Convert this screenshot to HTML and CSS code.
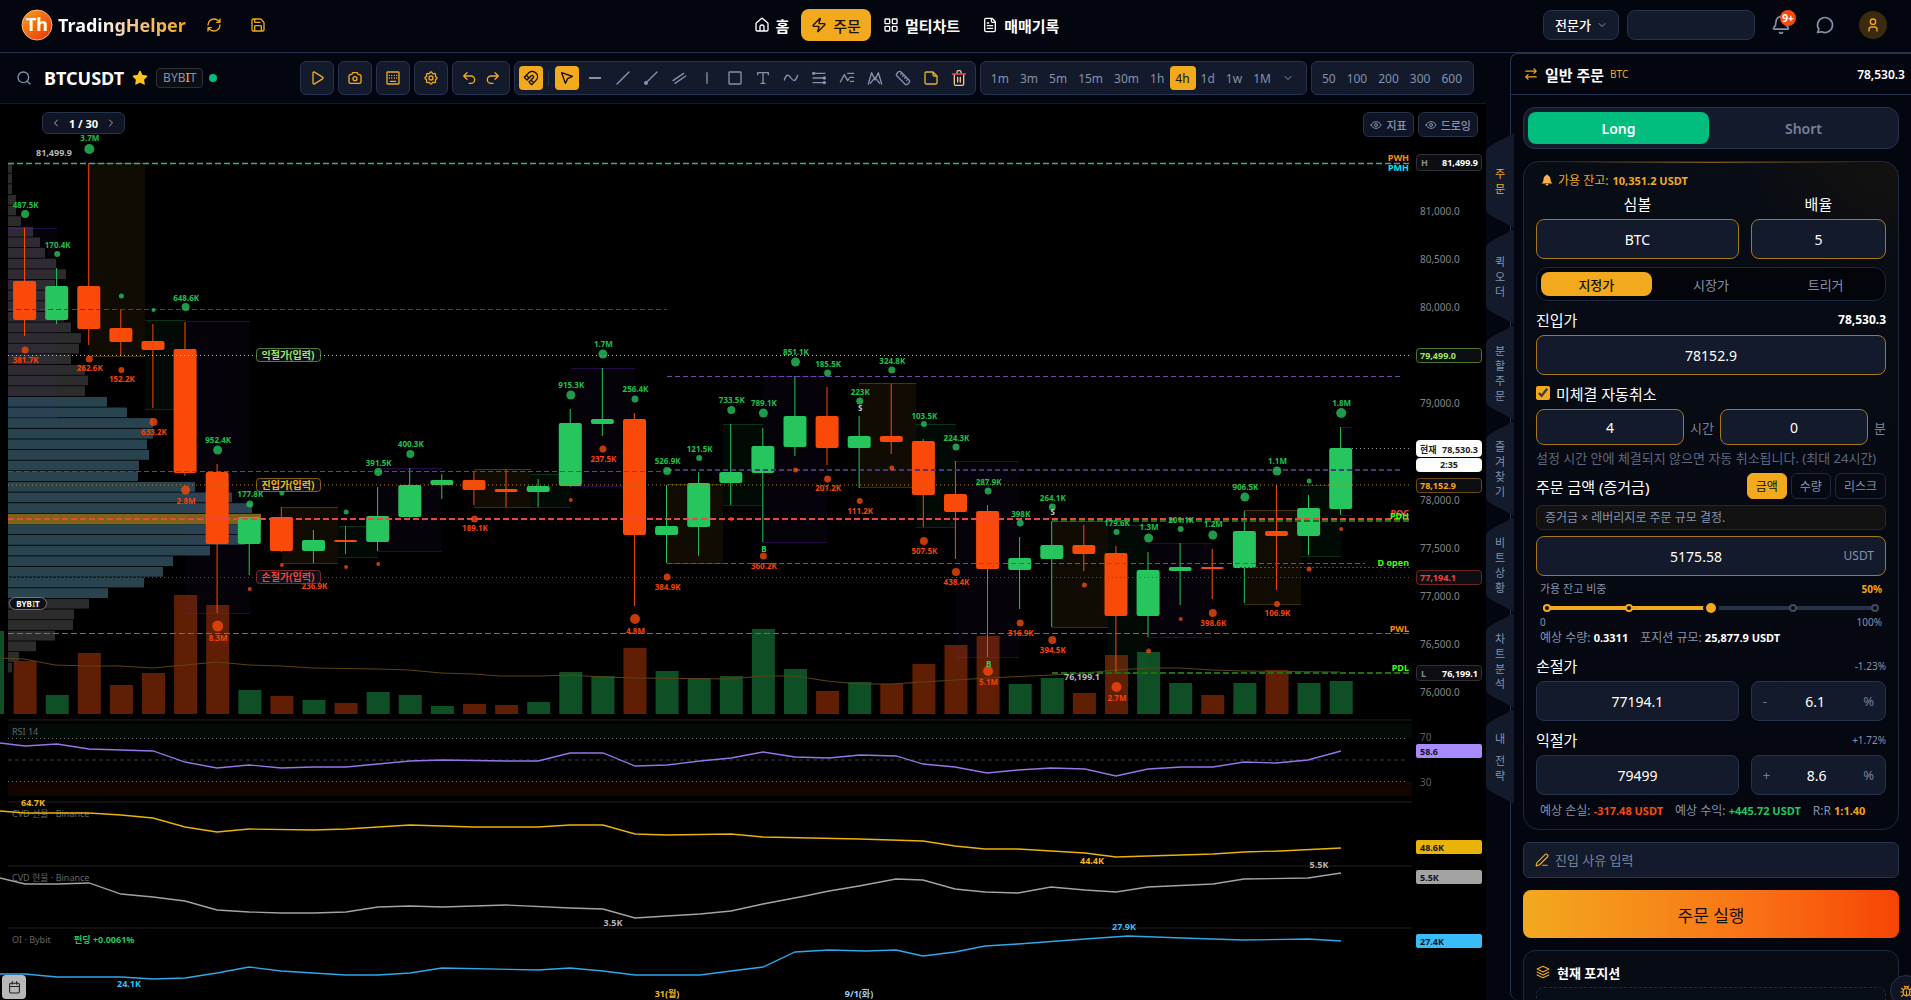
FILE: index.html
```html
<!DOCTYPE html>
<html lang="ko">
<head>
<meta charset="utf-8">
<title>TradingHelper</title>
<meta name="viewport" content="width=device-width, initial-scale=1">
<link rel="stylesheet" href="styles.css">
</head>
<body>
<svg class="sprite" aria-hidden="true">
  <symbol id="i-refresh" viewBox="0 0 24 24"><path d="M3 12a9 9 0 0 1 9-9 9.75 9.75 0 0 1 6.74 2.74L21 8M21 3v5h-5M21 12a9 9 0 0 1-9 9 9.75 9.75 0 0 1-6.74-2.74L3 16M8 16H3v5"/></symbol>
  <symbol id="i-save" viewBox="0 0 24 24"><path d="M15.2 3a2 2 0 0 1 1.4.6l3.8 3.8a2 2 0 0 1 .6 1.4V19a2 2 0 0 1-2 2H5a2 2 0 0 1-2-2V5a2 2 0 0 1 2-2zM17 21v-7a1 1 0 0 0-1-1H8a1 1 0 0 0-1 1v7M7 3v4a1 1 0 0 0 1 1h7"/></symbol>
  <symbol id="i-home" viewBox="0 0 24 24"><path d="M3 10a2 2 0 0 1 .7-1.5l7-6a2 2 0 0 1 2.6 0l7 6A2 2 0 0 1 21 10v9a2 2 0 0 1-2 2H5a2 2 0 0 1-2-2zM9 21v-6a3 3 0 0 1 6 0v6"/></symbol>
  <symbol id="i-zap" viewBox="0 0 24 24"><path d="M4 14a1 1 0 0 1-.78-1.63l9.9-10.2a.5.5 0 0 1 .86.46l-1.92 6.02A1 1 0 0 0 13 10h7a1 1 0 0 1 .78 1.63l-9.9 10.2a.5.5 0 0 1-.86-.46l1.92-6.02A1 1 0 0 0 11 14z"/></symbol>
  <symbol id="i-grid" viewBox="0 0 24 24"><rect x="3" y="3" width="7" height="7" rx="1"/><rect x="14" y="3" width="7" height="7" rx="1"/><rect x="3" y="14" width="7" height="7" rx="1"/><rect x="14" y="14" width="7" height="7" rx="1"/></symbol>
  <symbol id="i-file" viewBox="0 0 24 24"><path d="M15 2H6a2 2 0 0 0-2 2v16a2 2 0 0 0 2 2h12a2 2 0 0 0 2-2V7zM14 2v4a2 2 0 0 0 2 2h4M10 9H8M16 13H8M16 17H8"/></symbol>
  <symbol id="i-down" viewBox="0 0 24 24"><path d="m6 9 6 6 6-6"/></symbol>
  <symbol id="i-left" viewBox="0 0 24 24"><path d="m15 18-6-6 6-6"/></symbol>
  <symbol id="i-right" viewBox="0 0 24 24"><path d="m9 18 6-6-6-6"/></symbol>
  <symbol id="i-bell" viewBox="0 0 24 24"><path d="M10.3 21a2 2 0 0 0 3.4 0M3.3 15.3A1 1 0 0 0 4 17h16a1 1 0 0 0 .7-1.7C19.4 14 18 12.5 18 8A6 6 0 0 0 6 8c0 4.500-1.400 6-2.700 7.300"/></symbol>
  <symbol id="i-chat" viewBox="0 0 24 24"><path d="M3 21l1.650-3.800a9 9 0 1 1 3.400 2.900z"/></symbol>
  <symbol id="i-user" viewBox="0 0 24 24"><circle cx="12" cy="7" r="4"/><path d="M6 21v-2a4 4 0 0 1 4-4h4a4 4 0 0 1 4 4v2"/></symbol>
  <symbol id="i-search" viewBox="0 0 24 24"><circle cx="11" cy="11" r="8"/><path d="m21 21-4.300-4.300"/></symbol>
  <symbol id="i-star" viewBox="0 0 24 24"><path fill="currentColor" d="M12 2l3.100 6.300 6.900 1-5 4.900 1.200 6.800-6.200-3.200L5.800 21 7 14.200l-5-4.900 6.900-1z"/></symbol>
  <symbol id="i-play" viewBox="0 0 24 24"><path d="M6 4.500a1.500 1.500 0 0 1 2.300-1.300l12 7.500a1.500 1.500 0 0 1 0 2.600l-12 7.500A1.500 1.500 0 0 1 6 19.500z"/></symbol>
  <symbol id="i-camera" viewBox="0 0 24 24"><path d="M5 7h1a2 2 0 0 0 2-2 1 1 0 0 1 1-1h6a1 1 0 0 1 1 1 2 2 0 0 0 2 2h1a2 2 0 0 1 2 2v9a2 2 0 0 1-2 2H5a2 2 0 0 1-2-2V9a2 2 0 0 1 2-2"/><circle cx="12" cy="13" r="3"/></symbol>
  <symbol id="i-keys" viewBox="0 0 24 24"><rect x="3" y="3" width="18" height="18" rx="1"/><path d="M6.500 8h.1M10 8h.1M14 8h.1M17.500 8h.1M6.500 12h.1M10 12h.1M14 12h.1M17.500 12h.1M8 17h8"/></symbol>
  <symbol id="i-gear" viewBox="0 0 24 24"><path d="M10.300 4.300c.4-1.800 2.900-1.800 3.400 0a1.700 1.700 0 0 0 2.600 1.100c1.500-.9 3.300.8 2.400 2.400a1.700 1.700 0 0 0 1 2.500c1.800.4 1.800 2.900 0 3.400a1.700 1.700 0 0 0-1 2.600c.9 1.500-.9 3.300-2.400 2.400a1.700 1.700 0 0 0-2.600 1c-.4 1.800-2.900 1.800-3.400 0a1.700 1.700 0 0 0-2.500-1c-1.600.9-3.300-.9-2.400-2.400a1.700 1.700 0 0 0-1.100-2.600c-1.800-.5-1.800-3 0-3.400a1.700 1.700 0 0 0 1.100-2.500c-.9-1.600.8-3.300 2.400-2.400a1.700 1.700 0 0 0 2.500-1.100z"/><circle cx="12" cy="12" r="3"/></symbol>
  <symbol id="i-undo" viewBox="0 0 24 24"><path d="m9 14-5-5 5-5M4 9h11a5.500 5.500 0 0 1 0 11h-3"/></symbol>
  <symbol id="i-redo" viewBox="0 0 24 24"><path d="m15 14 5-5-5-5M20 9H9a5.500 5.500 0 0 0 0 11h3"/></symbol>
  <symbol id="i-magnet" viewBox="0 0 24 24"><path d="m6 15-4-4 6.750-6.770a7.790 7.790 0 0 1 11 11L13 22l-4-4 6.390-6.360a2.140 2.140 0 0 0-3-3zM5 8l4 4M12 15l4 4"/></symbol>
  <symbol id="i-cursor" viewBox="0 0 24 24"><path d="M4 4l5.500 16 3.500-7 7-3.500z"/></symbol>
  <symbol id="i-minus" viewBox="0 0 24 24"><path d="M4 12h16" stroke-width="3"/></symbol>
  <symbol id="i-line" viewBox="0 0 24 24"><path d="M3 21 21 3"/></symbol>
  <symbol id="i-ray" viewBox="0 0 24 24"><path d="M4 20 21 3"/><circle cx="4.500" cy="19.500" r="2" fill="currentColor"/></symbol>
  <symbol id="i-parallel" viewBox="0 0 24 24"><path d="M3 16 19 5M6 20 22 9"/></symbol>
  <symbol id="i-vline" viewBox="0 0 24 24"><path d="M12 4v16"/></symbol>
  <symbol id="i-rect" viewBox="0 0 24 24"><rect x="3" y="3" width="18" height="18" rx="1"/></symbol>
  <symbol id="i-text" viewBox="0 0 24 24"><path d="M4 7V4h16v3M12 4v16M9 20h6"/></symbol>
  <symbol id="i-wave" viewBox="0 0 24 24"><path d="M2 15c3-9 6-9 10-3s7 5 10-4"/></symbol>
  <symbol id="i-fib" viewBox="0 0 24 24"><path d="M3 5h18M3 12h18M3 19h18"/><path d="M4 5h.1M20 12h.1M20 19h.1" stroke-width="5"/></symbol>
  <symbol id="i-pattern" viewBox="0 0 24 24"><path d="M2 18 8 7l5 9 2-3M13 5h9M16 11h6M17 17h5"/></symbol>
  <symbol id="i-peaks" viewBox="0 0 24 24"><path d="M2 21 7 4l5 11 5-11 5 17M5 20l7-9 7 9"/></symbol>
  <symbol id="i-ruler" viewBox="0 0 24 24"><path d="M21.300 15.300a2.400 2.400 0 0 1 0 3.400l-2.600 2.600a2.400 2.400 0 0 1-3.400 0L2.700 8.700a2.400 2.400 0 0 1 0-3.400l2.600-2.600a2.400 2.400 0 0 1 3.400 0zM14.500 12.500l2-2M11.500 9.500l2-2M8.500 6.500l2-2M17.500 15.500l2-2"/></symbol>
  <symbol id="i-note" viewBox="0 0 24 24"><path d="M15 3H5a2 2 0 0 0-2 2v14a2 2 0 0 0 2 2h14a2 2 0 0 0 2-2V9zM15 3v4a2 2 0 0 0 2 2h4"/></symbol>
  <symbol id="i-eye" viewBox="0 0 24 24"><path d="M2 12c4-9 16-9 20 0-4 9-16 9-20 0z"/><circle cx="12" cy="12" r="3"/></symbol>
  <symbol id="i-swap" viewBox="0 0 24 24"><path d="m17 3 4 4-4 4M21 7H3M7 21l-4-4 4-4M3 17h18"/></symbol>
  <symbol id="i-pen" viewBox="0 0 24 24"><path d="M13 21h8M21.170 6.810a2.820 2.820 0 0 0-3.990-3.990L3.840 16.170a2 2 0 0 0-.5.830l-1.320 4.350a.5.500 0 0 0 .620.620l4.350-1.320a2 2 0 0 0 .830-.5z"/></symbol>
  <symbol id="i-layers" viewBox="0 0 24 24"><path d="M12 2 22 7 12 12 2 7zM2 12l10 5 10-5M2 17l10 5 10-5"/></symbol>
  <symbol id="i-calendar" viewBox="0 0 24 24"><rect x="3" y="4" width="18" height="18" rx="2"/><path d="M8 1v5M16 1v5M3 10h18"/></symbol>
  <symbol id="i-bug" viewBox="0 0 24 24"><path d="M8 2l2 2M16 2l-2 2M9 7V6a3 3 0 0 1 6 0v1M12 20a6 6 0 0 1-6-6v-3a4 4 0 0 1 4-4h4a4 4 0 0 1 4 4v3a6 6 0 0 1-6 6zM12 20v-9M6 13H2M22 13h-4M6 9 3 6M18 9l3-3M7 17l-4 4M17 17l4 4"/></symbol>
</svg>

<header class="topbar">
  <div class="brand">
    <svg class="logo" viewBox="0 0 32 32" role="img" aria-label="TradingHelper">
      <defs><linearGradient id="logo-fill" x1="0" y1="0" x2="1" y2="1"><stop offset="0" stop-color="#f9a01b"/><stop offset="1" stop-color="#e8300a"/></linearGradient></defs>
      <circle cx="16" cy="16" r="15" fill="url(#logo-fill)" stroke="#f3b673"/>
      <text x="16" y="22" text-anchor="middle" class="logo-text">Th</text>
    </svg>
    <span class="brand-name">TradingHelper</span>
    <button class="icon-button" aria-label="새로고침"><svg class="icon"><use href="#i-refresh"/></svg></button>
    <button class="icon-button" aria-label="저장"><svg class="icon"><use href="#i-save"/></svg></button>
  </div>
  <nav class="nav">
    <a href="#home"><svg class="icon"><use href="#i-home"/></svg>홈</a>
    <a href="#order" class="active"><svg class="icon"><use href="#i-zap"/></svg>주문</a>
    <a href="#multi"><svg class="icon"><use href="#i-grid"/></svg>멀티차트</a>
    <a href="#journal"><svg class="icon"><use href="#i-file"/></svg>매매기록</a>
  </nav>
  <div class="account">
    <span class="level">
      <select aria-label="모드"><option>전문가</option></select>
      <svg class="icon"><use href="#i-down"/></svg>
    </span>
    <input class="top-input" type="text" aria-label="검색">
    <button class="round-button" aria-label="알림"><svg class="icon"><use href="#i-bell"/></svg><span class="badge">9+</span></button>
    <button class="round-button chat" aria-label="채팅"><svg class="icon"><use href="#i-chat"/></svg></button>
    <button class="avatar" aria-label="계정"><svg class="icon"><use href="#i-user"/></svg></button>
  </div>
</header>

<main class="workspace">
  <section class="chart-column">
    <div class="toolbar">
      <button class="search" aria-label="심볼 검색"><svg class="icon"><use href="#i-search"/></svg></button>
      <h1 class="pair">BTCUSDT</h1>
      <svg class="icon star"><use href="#i-star"/></svg>
      <span class="exchange">BYB<b>I</b>T</span>
      <span class="online"></span>
      <div class="tools">
        <button class="box-button" aria-label="재생"><svg class="icon"><use href="#i-play"/></svg></button>
        <button class="box-button" aria-label="캡처"><svg class="icon"><use href="#i-camera"/></svg></button>
        <button class="box-button" aria-label="단축키"><svg class="icon"><use href="#i-keys"/></svg></button>
        <button class="box-button" aria-label="설정"><svg class="icon"><use href="#i-gear"/></svg></button>
        <div class="group gold">
          <button class="tool" aria-label="실행 취소"><svg class="icon"><use href="#i-undo"/></svg></button>
          <button class="tool" aria-label="다시 실행"><svg class="icon"><use href="#i-redo"/></svg></button>
        </div>
        <div class="group drawing">
          <button class="tool on" aria-label="자석"><svg class="icon"><use href="#i-magnet"/></svg></button>
          <span class="divider"></span>
          <button class="tool on" aria-label="선택"><svg class="icon"><use href="#i-cursor"/></svg></button>
          <button class="tool" aria-label="수평선"><svg class="icon"><use href="#i-minus"/></svg></button>
          <button class="tool" aria-label="추세선"><svg class="icon"><use href="#i-line"/></svg></button>
          <button class="tool" aria-label="광선"><svg class="icon"><use href="#i-ray"/></svg></button>
          <button class="tool" aria-label="채널"><svg class="icon"><use href="#i-parallel"/></svg></button>
          <button class="tool" aria-label="수직선"><svg class="icon"><use href="#i-vline"/></svg></button>
          <button class="tool" aria-label="사각형"><svg class="icon"><use href="#i-rect"/></svg></button>
          <button class="tool" aria-label="텍스트"><svg class="icon"><use href="#i-text"/></svg></button>
          <button class="tool" aria-label="곡선"><svg class="icon"><use href="#i-wave"/></svg></button>
          <button class="tool" aria-label="피보나치"><svg class="icon"><use href="#i-fib"/></svg></button>
          <button class="tool" aria-label="패턴"><svg class="icon"><use href="#i-pattern"/></svg></button>
          <button class="tool" aria-label="파동"><svg class="icon"><use href="#i-peaks"/></svg></button>
          <button class="tool" aria-label="자"><svg class="icon"><use href="#i-ruler"/></svg></button>
          <button class="tool yellow" aria-label="메모"><svg class="icon"><use href="#i-note"/></svg></button>
          <button class="tool" aria-label="삭제"><svg class="trash" viewBox="0 0 24 24"><path d="M5 7v14a2 2 0 0 0 2 2h10a2 2 0 0 0 2-2V7M9 5V3a2 2 0 0 1 2-2h2a2 2 0 0 1 2 2v2M10 11v7M14 11v7" stroke="#f5c58f"/><path d="M2 6h20" stroke="#ef4560"/></svg></button>
        </div>
        <div class="group frames">
          <button>1m</button><button>3m</button><button>5m</button><button>15m</button><button>30m</button><button>1h</button><button class="on">4h</button><button>1d</button><button>1w</button><button>1M</button>
          <button class="more" aria-label="더보기"><svg class="icon"><use href="#i-down"/></svg></button>
        </div>
        <div class="group frames">
          <button>50</button><button>100</button><button>200</button><button>300</button><button>600</button>
        </div>
      </div>
    </div>
    <div class="chart">
      <svg id="chart" viewBox="0 104 1486 896" preserveAspectRatio="xMinYMin meet" role="img" aria-label="BTCUSDT 4h"></svg>
      <div class="pager">
        <button aria-label="이전"><svg class="icon"><use href="#i-left"/></svg></button>
        <span>1 / 30</span>
        <button aria-label="다음"><svg class="icon"><use href="#i-right"/></svg></button>
      </div>
      <div class="toggles">
        <button><svg class="icon"><use href="#i-eye"/></svg>지표</button>
        <button><svg class="icon"><use href="#i-eye"/></svg>드로잉</button>
      </div>
      <button class="calendar" aria-label="날짜"><svg class="icon"><use href="#i-calendar"/></svg></button>
    </div>
  </section>

  <nav class="side-tabs">
    <button class="on"><span>주문</span></button>
    <button><span>퀵오더</span></button>
    <button><span>분할주문</span></button>
    <button><span>즐겨찾기</span></button>
    <button><span>비트상황</span></button>
    <button><span>차트분석</span></button>
    <button><span>내</span> <span>전략</span></button>
  </nav>

  <aside class="panel">
    <div class="panel-head">
      <svg class="icon"><use href="#i-swap"/></svg>
      <h2>일반 주문</h2><span class="coin">BTC</span>
      <strong>78,530.3</strong>
    </div>
    <form class="panel-body">
      <div class="sides">
        <button type="button" class="on">Long</button>
        <button type="button">Short</button>
      </div>

      <div class="card order">
        <p class="notice"><svg class="bell-fill" viewBox="0 0 24 24"><path d="M12 1a2 2 0 0 1 2 2c3 1 5 4 5 8 0 4 2 6 4 8H1c2-2 4-4 4-8 0-4 2-7 5-8a2 2 0 0 1 2-2z"/><path d="M9 20h6a3 3 0 0 1-6 0z"/></svg>가용 잔고: <b>10,351.2 USDT</b></p>
        <div class="pair-row head">
          <label for="symbol">심볼</label><label for="leverage">배율</label>
        </div>
        <div class="pair-row">
          <input id="symbol" class="gold-field" type="text" value="BTC">
          <input id="leverage" class="gold-field" type="text" value="5">
        </div>
        <div class="segments">
          <button type="button" class="on">지정가</button>
          <button type="button">시장가</button>
          <button type="button">트리거</button>
        </div>
        <div class="field-head"><label for="entry">진입가</label><strong>78,530.3</strong></div>
        <input id="entry" class="gold-field" type="text" value="78152.9">
        <label class="check"><input type="checkbox" checked>미체결 자동취소</label>
        <div class="expiry">
          <input id="hours" class="gold-field" type="text" value="4"><label for="hours">시간</label>
          <input id="minutes" class="gold-field" type="text" value="0"><label for="minutes">분</label>
        </div>
        <p class="help">설정 시간 안에 체결되지 않으면 자동 취소됩니다. (최대 24시간)</p>
        <div class="amount-head">
          <label for="amount">주문 금액 (증거금)</label>
          <button type="button" class="on">금액</button>
          <button type="button">수량</button>
          <button type="button">리스크</button>
        </div>
        <p class="hint">증거금 × 레버리지로 주문 규모 결정.</p>
        <div class="unit-field">
          <input id="amount" class="gold-field" type="text" value="5175.58"><span>USDT</span>
        </div>
        <div class="ratio-head"><label for="ratio">가용 잔고 비중</label><strong>50%</strong></div>
        <div class="slider">
          <span class="dots"><i class="full"></i><i class="full"></i><i class="gap"></i><i></i><i></i></span>
          <input id="ratio" type="range" min="0" max="100" value="50">
        </div>
        <div class="scale"><span>0</span><span>100%</span></div>
        <p class="estimate"><span>예상 수량: <b>0.3311</b></span><span>포지션 규모: <b>25,877.9 USDT</b></span></p>
        <div class="field-head stop"><label for="stop">손절가</label><small>-1.23%</small></div>
        <div class="pair-row">
          <input id="stop" class="field" type="text" value="77194.1">
          <div class="percent"><span>-</span><input class="field" type="text" aria-label="손절 비율" value="6.1"><span>%</span></div>
        </div>
        <div class="field-head"><label for="take">익절가</label><small>+1.72%</small></div>
        <div class="pair-row">
          <input id="take" class="field" type="text" value="79499">
          <div class="percent"><span>+</span><input class="field" type="text" aria-label="익절 비율" value="8.6"><span>%</span></div>
        </div>
        <p class="estimate result"><span>예상 손실: <b class="loss">-317.48 USDT</b></span><span>예상 수익: <b class="gain">+445.72 USDT</b></span><span>R:R <b class="rr">1:1.40</b></span></p>
      </div>

      <div class="reason">
        <svg class="icon"><use href="#i-pen"/></svg>
        <input type="text" aria-label="진입 사유" placeholder="진입 사유 입력">
      </div>
      <button type="submit" class="submit">주문 실행</button>

      <section class="card positions">
        <h3><svg class="icon"><use href="#i-layers"/></svg>현재 포지션</h3>
        <div class="empty"></div>
      </section>
    </form>
  </aside>
  <button class="bug" aria-label="버그 신고"><svg class="icon"><use href="#i-bug"/></svg></button>
</main>
<script src="chart.js"></script>
</body>
</html>
```
FILE: styles.css
```css
* { box-sizing: border-box; }

:root {
  --bg: #03060e;
  --surface: #121a2b;
  --line: #26334c;
  --gold: #f2a91e;
  --gold-line: #a87718;
  --muted: #8592ab;
  --green: #22c55e;
  --red: #f94a0a;
}

body {
  margin: 0;
  height: 100vh;
  display: flex;
  flex-direction: column;
  overflow: hidden;
  background: var(--bg);
  color: #fff;
  font-family: "Noto Sans", "Noto Sans CJK KR", sans-serif;
  font-size: 12px;
}

button, input, select { font: inherit; color: inherit; }
button { margin: 0; padding: 0; border: 0; background: none; cursor: pointer; }
h1, h2, h3, p { margin: 0; }
.sprite { position: absolute; width: 0; height: 0; }
.icon, .trash {
  width: 16px;
  height: 16px;
  flex: none;
  fill: none;
  stroke: currentColor;
  stroke-width: 2;
  stroke-linecap: round;
  stroke-linejoin: round;
}

/* top bar */
.topbar {
  flex: none;
  height: 53px;
  padding: 0 24px 2px 21px;
  display: flex;
  align-items: center;
  justify-content: space-between;
  border-bottom: 1px solid var(--line);
}
.brand { display: flex; align-items: center; }
.logo { width: 32px; height: 32px; margin-right: 5px; }
.logo-text { fill: #fff; font-size: 18px; font-weight: 700; }
.brand-name {
  margin-right: 16px;
  font-size: 18px;
  font-weight: 700;
  background: linear-gradient(90deg, #fff 30%, #f2c48c 60%, var(--gold));
  background-clip: text;
  color: transparent;
}
.icon-button { width: 24px; height: 24px; margin-right: 20px; color: var(--gold); display: grid; place-items: center; }
.icon-button:last-child { margin-right: 0; }
.nav { display: flex; gap: 2px; }
.nav a {
  height: 32px;
  padding: 0 10px;
  display: flex;
  align-items: center;
  gap: 6px;
  border-radius: 8px;
  color: #fff;
  font-size: 15px;
  font-weight: 600;
  text-decoration: none;
}
.nav a.active { background: var(--gold); color: #1a1405; font-weight: 500; }
.account { display: flex; align-items: center; }
.level { position: relative; display: flex; align-items: center; }
.level select {
  width: 76px;
  height: 30px;
  padding: 0 11px;
  appearance: none;
  border: 1px solid var(--line);
  border-radius: 8px;
  background: var(--surface);
  font-size: 13px;
  font-weight: 500;
}
.level .icon { position: absolute; right: 11px; width: 12px; height: 12px; color: var(--muted); pointer-events: none; }
.top-input {
  width: 128px;
  height: 30px;
  margin: 0 8px;
  border: 1px solid var(--line);
  border-radius: 8px;
  background: var(--surface);
}
.round-button { position: relative; width: 36px; height: 32px; color: var(--muted); display: grid; place-items: center; }
.round-button .icon { width: 20px; height: 20px; }
.round-button.chat { width: 52px; }
.badge {
  position: absolute;
  top: 1px;
  right: 3px;
  width: 16px;
  height: 16px;
  border-radius: 8px;
  background: var(--red);
  color: #fff;
  font-size: 10px;
  font-weight: 700;
  line-height: 16px;
  text-align: center;
}
.avatar { width: 28px; height: 28px; margin-left: 8px; border-radius: 50%; background: #3a2a10; color: var(--gold); display: grid; place-items: center; }

/* workspace */
.workspace { flex: 1; min-height: 0; display: flex; position: relative; }
.chart-column { flex: 1; min-width: 0; display: flex; flex-direction: column; }
.toolbar {
  flex: none;
  height: 51px;
  padding: 0 12px 0 16px;
  display: flex;
  align-items: center;
  border-bottom: 1px solid #15181f;
}
.search { width: 16px; height: 16px; margin-right: 12px; color: var(--muted); }
.pair { font-size: 18px; font-weight: 700; }
.star { margin: 0 8px; color: #fcc419; }
.exchange {
  padding: 0 6px;
  border: 1px solid #2c2f36;
  border-radius: 4px;
  background: #0c0e14;
  color: var(--muted);
  line-height: 18px;
}
.exchange b { font-weight: 500; color: var(--gold); }
.online { width: 8px; height: 8px; margin-left: 6px; border-radius: 50%; background: #00bf7d; }
.tools { margin-left: auto; display: flex; gap: 4px; }
.box-button, .group {
  height: 34px;
  border: 1px solid var(--line);
  border-radius: 6px;
  background: var(--surface);
}
.box-button { width: 34px; color: var(--gold); display: grid; place-items: center; }
.group { padding: 0 4px; display: flex; align-items: center; gap: 4px; }
.group.gold { gap: 0; color: var(--gold); }
.tool { width: 24px; height: 24px; border-radius: 4px; display: grid; place-items: center; }
.drawing { color: var(--muted); }
.tool.on { background: var(--gold); color: #12100a; }
.tool.yellow { color: #e6b422; }
.divider { width: 1px; height: 16px; margin: 0 2px 0 1px; background: var(--line); }
.group.frames { gap: 0; padding: 0 5px; color: var(--muted); }
.frames button { height: 24px; padding: 0 6px 0 5px; border-radius: 4px; }
.frames .on { background: var(--gold); color: #12100a; }
.frames .more { width: 24px; display: grid; place-items: center; }
.frames .more .icon { width: 12px; height: 12px; }

.chart { position: relative; flex: 1; min-height: 0; overflow: hidden; background: #000; }
.chart > svg { display: block; width: 100%; }
.pager, .toggles { position: absolute; display: flex; align-items: center; }
.pager {
  top: 8px;
  left: 42px;
  width: 83px;
  height: 22px;
  padding: 0 7px;
  justify-content: space-between;
  border: 1px solid var(--line);
  border-radius: 6px;
  background: #0f1524;
  font-size: 11px;
  font-weight: 700;
}
.pager .icon { width: 12px; height: 12px; display: block; color: #a3abba; }
.toggles { top: 8px; right: 8px; gap: 4px; }
.toggles button {
  height: 25px;
  padding: 0 6px;
  display: flex;
  align-items: center;
  gap: 4px;
  border: 1px solid var(--line);
  border-radius: 6px;
  background: #0f1524;
  color: var(--muted);
  font-size: 11px;
  font-weight: 500;
}
.toggles .icon { width: 12px; height: 12px; }
.calendar {
  position: absolute;
  left: 2px;
  bottom: 1px;
  width: 24px;
  height: 24px;
  border-radius: 4px;
  background: #b9b9b9;
  color: #222;
  display: grid;
  place-items: center;
}
.calendar .icon { width: 13px; height: 13px; }

/* chart drawing */
.lbl { font-size: 8px; font-weight: 700; text-anchor: middle; }
.axis { font-size: 10px; fill: #858585; }
.axis.dim { fill: #5c5c5c; }
.tag { font-size: 9px; font-weight: 700; }
.tag.big { font-size: 10px; }
.title { font-size: 9px; fill: #666; }
.end { text-anchor: end; }
.mid { text-anchor: middle; }

/* side tabs */
.side-tabs { flex: none; width: 24px; padding-top: 80px; display: flex; flex-direction: column; gap: 1px; z-index: 2; }
.side-tabs button {
  flex: none;
  width: 28px;
  height: 95px;
  display: flex;
  flex-direction: column;
  align-items: center;
  justify-content: center;
  gap: 7px;
  background: var(--surface);
  clip-path: polygon(100% 0, 18% 13%, 5% 16%, 0 19%, 0 81%, 5% 84%, 18% 87%, 100% 100%);
  color: var(--muted);
  font-size: 11px;
  line-height: 15px;
}
.side-tabs span { width: 11px; word-break: break-all; }
.side-tabs .on { color: var(--gold); }

/* order panel */
.panel {
  flex: none;
  width: 401px;
  border-left: 1px solid var(--line);
  border-top: 1px solid var(--line);
  border-radius: 8px 0 0 8px;
  display: flex;
  flex-direction: column;
  min-height: 0;
}
.panel-head {
  flex: none;
  height: 41px;
  padding: 0 6px 0 13px;
  display: flex;
  align-items: center;
  border-bottom: 1px solid var(--line);
}
.panel-head .icon { width: 14px; height: 14px; color: var(--gold); }
.panel-head h2 { margin: 0 6px 0 7px; font-size: 15px; font-weight: 600; }
.coin { color: var(--gold); font-size: 10px; }
.panel-head strong { margin-left: auto; font-size: 12px; font-weight: 600; }
.panel-body {
  flex: 1;
  min-height: 0;
  padding: 12px;
  display: flex;
  flex-direction: column;
  gap: 12px;
  overflow-y: auto;
  scrollbar-width: none;
}
.panel-body > * { flex: none; }
.sides {
  height: 42px;
  padding: 4px;
  display: grid;
  grid-template-columns: 1fr 1fr;
  gap: 4px;
  border: 1px solid var(--line);
  border-radius: 12px;
  background: var(--surface);
}
.sides button { border-radius: 8px; color: #76829a; font-size: 14px; font-weight: 600; }
.sides .on { background: #00bd7e; color: #fff; }

.card { border: 1px solid #1d2940; background: #070b14; }
.order {
  padding: 10px 12px;
  display: flex;
  flex-direction: column;
  border-radius: 16px;
  background:
    linear-gradient(90deg, transparent 10%, #7a5a18 50%, transparent 90%) top / 100% 1px no-repeat,
    radial-gradient(160px 120px at 100% 0, #15120f, transparent),
    linear-gradient(180deg, #080c15, #04070f);
}
.notice { height: 16px; padding-left: 5px; display: flex; align-items: center; gap: 4px; color: var(--gold); font-size: 12px; }
.notice b { font-size: 11px; font-weight: 700; }
.bell-fill { width: 12px; height: 12px; margin-right: 1px; fill: #f7b24d; }
.pair-row { display: grid; grid-template-columns: 3fr 2fr; gap: 12px; }
.pair-row.head { margin: 6px 0 5px; text-align: center; font-size: 15px; line-height: 20px; }
.gold-field, .field {
  width: 100%;
  min-width: 0;
  height: 40px;
  padding: 0 12px;
  border: 1px solid var(--gold-line);
  border-radius: 8px;
  background: var(--surface);
  font-size: 14px;
  text-align: center;
}
.field { border-color: var(--line); }
.segments {
  height: 34px;
  margin-top: 8px;
  padding: 4px;
  display: grid;
  grid-template-columns: repeat(3, 1fr);
  gap: 4px;
  border: 1px solid #1d2940;
  border-radius: 12px;
  background: #03050b;
}
.segments button { border-radius: 8px; color: var(--muted); font-size: 13px; }
.segments .on { background: var(--gold); color: #12100a; font-weight: 500; }
.field-head {
  margin: 9px 0 5px;
  display: flex;
  justify-content: space-between;
  align-items: center;
  font-size: 15px;
  line-height: 20px;
}
.field-head strong { font-size: 12px; font-weight: 700; }
.field-head small { color: var(--muted); font-size: 10px; }
.field-head.stop { margin-top: 10px; }
.check { height: 20px; margin: 8px 0 6px; display: flex; align-items: center; gap: 6px; font-size: 15px; }
.check input { width: 14px; height: 14px; margin: 0; accent-color: var(--gold); }
.expiry { display: flex; align-items: center; gap: 6px; color: #76829a; font-size: 13px; }
.expiry .gold-field { flex: 1; height: 36px; color: #fff; }
.help { margin: 4px 0 6px; color: #5d6880; font-size: 13px; line-height: 18px; white-space: nowrap; }
.amount-head { height: 26px; display: flex; align-items: center; gap: 4px; font-size: 15px; }
.amount-head label { margin-right: auto; }
.amount-head button {
  height: 26px;
  padding: 0 8px;
  border: 1px solid #1d2940;
  border-radius: 6px;
  color: var(--muted);
  font-size: 12px;
}
.amount-head .on { background: var(--gold); border-color: var(--gold); color: #12100a; }
.hint {
  height: 25px;
  margin: 6px 0;
  padding: 0 8px;
  border: 1px solid #33261a;
  border-radius: 6px;
  background: #121212;
  color: var(--muted);
  font-size: 12px;
  line-height: 23px;
}
.unit-field { position: relative; }
.unit-field input { padding-right: 42px; }
.unit-field span { position: absolute; top: 0; right: 12px; color: var(--muted); font-size: 12px; line-height: 40px; }
.unit-field input { display: block; }
.ratio-head, .scale { padding: 0 4px; display: flex; justify-content: space-between; color: var(--muted); }
.ratio-head { margin: 5px 0 3px; font-size: 11px; line-height: 16px; }
.ratio-head strong { color: #f5a20f; font-size: 10px; font-weight: 700; }
.slider { position: relative; height: 16px; margin: 0 7px; }
.slider input {
  display: block;
  width: 100%;
  height: 16px;
  margin: 0;
  appearance: none;
  background: linear-gradient(90deg, var(--gold) 50%, #283348 50%) center / 100% 4px no-repeat;
}
.slider input::-webkit-slider-thumb {
  width: 16px;
  height: 16px;
  appearance: none;
  border: 3px solid #060a13;
  border-radius: 50%;
  background: var(--gold);
}
.dots { position: absolute; inset: 4px 0; display: flex; justify-content: space-between; pointer-events: none; }
.dots i { width: 8px; height: 8px; border: 2px solid #454b57; border-radius: 50%; background: #060a13; }
.dots .full { border-color: var(--gold); }
.dots .gap { visibility: hidden; }
.scale { font-size: 10px; line-height: 12px; }
.estimate { margin-top: 2px; padding-left: 4px; display: flex; gap: 12px; color: var(--muted); font-size: 12px; line-height: 16px; white-space: nowrap; }
.estimate b { color: #fff; font-size: 11px; font-weight: 700; }
.result { margin-top: 8px; }
.estimate .loss { color: var(--red); }
.estimate .gain { color: var(--green); }
.estimate .rr { color: #f5a20f; }
.percent {
  display: flex;
  align-items: center;
  padding: 0 11px;
  border: 1px solid var(--line);
  border-radius: 8px;
  background: var(--surface);
  color: #76829a;
  font-size: 13px;
}
.percent .field { height: 38px; border: 0; background: none; color: #fff; }

.reason {
  height: 36px;
  padding: 0 11px;
  display: flex;
  align-items: center;
  gap: 6px;
  border: 1px solid var(--line);
  border-radius: 6px;
  background: var(--surface);
  font-size: 13px;
}
.reason .icon { width: 14px; height: 14px; color: var(--gold); }
.reason input { flex: 1; padding: 0; border: 0; background: none; outline: 0; }
.reason input::placeholder { color: #76829a; }
.submit {
  height: 48px;
  border-radius: 8px;
  background: linear-gradient(90deg, #f2a91e, #f97316 60%, #f74405);
  color: #14100a;
  font-size: 17px;
}
.positions { padding: 12px; border-radius: 12px; }
.positions h3 { height: 18px; margin-bottom: 6px; display: flex; align-items: center; gap: 7px; font-size: 13px; font-weight: 600; }
.positions .icon { width: 14px; height: 14px; color: var(--gold); }
.empty { height: 80px; border: 1px dashed #202b40; border-radius: 8px; background: #080e18; }
.bug {
  position: absolute;
  right: -11px;
  bottom: -7px;
  width: 32px;
  height: 32px;
  border: 1px solid var(--line);
  border-radius: 50%;
  background: #0f1524;
  color: var(--gold);
  display: grid;
  place-items: center;
  z-index: 3;
}
.bug .icon { width: 13px; height: 13px; }
```
FILE: chart.js
```js
const UP = '#26c55e', DOWN = '#f94a0a';
const out = [];
const xAt = i => 24.6 + 32.1 * i;
const rect = (x, y, w, h, fill, extra = '') => out.push(`<rect x="${x}" y="${y}" width="${w}" height="${h}" fill="${fill}" ${extra}/>`);
const line = (x1, x2, y, color, dash, w = 1) => out.push(`<path d="M${x1} ${y}H${x2}" stroke="${color}" stroke-width="${w}" stroke-dasharray="${dash}" fill="none"/>`);
const text = (x, y, s, cls, fill = '') => out.push(`<text x="${x}" y="${y}" class="${cls}"${fill ? ` style="fill:${fill}"` : ''}>${s}</text>`);
const poly = (pts, color, w = 1.3) => out.push(`<polyline points="${pts}" stroke="${color}" stroke-width="${w}" fill="none"/>`);

/* candle: direction, body top, body bottom, high, low, volume top */
const candles = [
  ['d',281,320,228,336,661],['u',286,320,268,324,695],['d',286,329,163,345,653],['d',328,342,310,356,685],
  ['d',341,350,324,408,673],['d',349,473,322,476,595],['d',472,544,464,613,605],['u',517,544,517,575,690],
  ['d',517,551,507,552,696],['u',540,551,530,563,700],['d',540,542,526,554,703],['u',516,542,487,551,692],
  ['u',485,517,468,518,695],['u',480,485,474,499,706],['d',480,490,471,505,704],['d',489,492,469,507,705],
  ['u',486,492,479,507,702],['u',423,486,409,487,672],['u',419,424,368,436,676],['d',419,535,413,606,648],
  ['u',526,535,485,563,671],['u',483,527,472,556,678],['u',472,483,424,505,676],['u',446,473,428,542,629],
  ['u',416,447,376,456,669],['d',416,448,387,465,691],['u',436,448,416,488,682],['d',436,442,384,454,684],
  ['d',441,495,439,527,664],['d',494,512,461,559,645],['d',511,569,505,657,636],['u',558,570,537,609,684],
  ['u',545,559,521,627,678],['d',545,554,525,571,693],['d',553,616,546,673,655],['u',570,616,552,637,652],
  ['u',567,571,543,605,683],['d',567,569,549,599,695],['u',531,568,511,603,683],['d',531,536,485,590,670],
  ['u',508,536,495,555,683],['u',448,509,427,515,681]
];

/* liquidation bubble: index, centre y, radius, label, label y */
const longs = [
  [0,214,4,'487.5K',205],[1,254,3,'170.4K',245],[2,149,5,'3.7M',138],[3,296,2.5],[4,310,2],[5,307,4,'648.6K',298],
  [6,450,4.5,'952.4K',440],[7,504,3.5,'177.8K',494],[8,493,2.5],[10,512,2.5],[11,472,4,'391.5K',463],[12,454,4,'400.3K',444],
  [17,395,4.5,'915.3K',385],[18,354,4.5,'1.7M',344],[19,399,3.5,'256.4K',389],[20,471,4,'526.9K',461],[21,458,3,'121.5K',449],
  [22,410,4,'733.5K',400],[23,413,4.5,'789.1K',403],[24,362,4.5,'851.1K',352],[25,373,3.5,'185.5K',364],[26,401,3.5,'223K',392],
  [27,370,3.5,'324.8K',361],[28,424,3,'103.5K',416],[29,447,3.5,'224.3K',438],[30,491,3.5,'287.9K',482],[31,523,3.5,'398K',514],
  [32,507,3.5,'264.1K',498],[34,532,3,'179.6K',523],[35,538,4.5,'1.3M',527],[36,529,3,'201.1K',520],[37,535,4.5,'1.2M',524],
  [38,497,4.5,'906.5K',487],[39,471,4.5,'1.1M',461],[40,481,2.5],[41,413,5,'1.8M',403]
];
const shorts = [
  [0,350,3.5,'381.7K',360],[2,359,3.5,'262.6K',368],[3,370,3,'152.2K',379],[4,422,4,'633.2K',432],[5,490,4.5,'2.8M',501],
  [6,626,5.5,'8.3M',638],[7,589,2],[8,565,2],[9,576,3,'236.9K',586],[10,567,2],[11,564,2],[14,519,3.5,'189.1K',528],
  [17,500,2],[18,449,3.5,'237.5K',459],[19,619,5,'4.8M',631],[20,577,3.5,'384.9K',587],[22,519,2],[23,556,3.5,'360.2K',566],
  [24,470,2.5],[25,479,3.5,'201.2K',488],[26,501,3,'111.2K',511],[27,468,2.5],[28,541,4,'507.5K',551],[29,572,4,'438.4K',582],
  [30,671,5,'5.1M',682],[31,623,3.5,'316.9K',633],[32,640,4,'394.5K',650],[33,585,2.5],[34,687,5,'2.7M',698],[35,651,2.5],
  [36,619,2],[37,613,4,'398.6K',623],[39,604,3,'106.9K',613],[40,569,2.5],[41,529,2]
];

/* session boxes: kind, left, right, top, bottom */
const sessions = [
  ['p',8,57,228,417],['y',89,145,163,356],['g',145,186,320,409],['p',186,250,321,613],['y',282,338,507,563],['g',338,378,526,557],
  ['p',378,442,468,551],['y',474,531,469,507],['g',531,571,474,507],['p',571,635,368,486],['y',667,723,484,563],['g',723,763,424,505],
  ['p',763,827,376,542],['y',859,916,383,487],['g',916,956,424,527],['p',956,1019,461,657],['y',1052,1108,521,627],['g',1108,1148,525,673],
  ['p',1148,1212,543,637],['y',1244,1301,510,604],['g',1301,1341,485,556],['p',1341,1352,427,515]
];
const sessionColor = { p: '#6020c0', y: '#b08020', g: '#10803f' };
const sessionAlpha = { p: 0.05, y: 0.09, g: 0.08 };

/* right edges of the volume profile rows, from the top */
const profile = [12,12,12,16,16,21,33,40,45,56,66,55,56,56,64,71,81,79,71,85,88,85,107,127,153,153,147,149,139,138,195,232,252,261,256,245,210,173,163,144,108,89,74,73,55,36,19,12];
profile.forEach((right, k) => {
  const fill = k === 33 ? '#7d6416' : k >= 22 && k <= 40 ? '#29434f' : '#2c2c2c';
  rect(8, (163 + 10.63 * k).toFixed(1), right - 8, k === 33 ? 10.6 : 9.8, fill);
});

/* volume */
rect(0, 631, 4, 83, '#0f4f26');
candles.forEach(([dir, , , , , v], i) => rect(xAt(i) - 11, v, 23, 714 - v, dir === 'u' ? '#0f4f26' : '#601e05'));
poly('0,658 24,659 55,665 88,666 120,666 152,668 185,665 217,662 249,665 281,666 313,668 377,669 409,670 441,673 473,674 500,676 540,676 570,675 602,677 634,678 730,679 763,676 795,676 827,681 859,684 891,684 923,682 955,680 987,678 1052,675 1084,673 1116,670 1148,668 1180,668 1212,670 1244,671 1340,672', '#5f4311', 1);

sessions.forEach(([kind, l, r, t, b]) => {
  const c = sessionColor[kind];
  rect(l, t, r - l, b - t, c, `fill-opacity="${sessionAlpha[kind]}"`);
  out.push(`<path d="M${l} ${t + .5}H${r}M${l} ${b + .5}H${r}" stroke="${c}" stroke-opacity=".35"/>`);
});

/* candles */
candles.forEach(([dir, top, bottom, high, low], i) => {
  const c = dir === 'u' ? UP : DOWN, x = xAt(i);
  rect(x - .6, high, 1, low - high, c);
  rect(x - 11.500, top, 23, Math.max(2, bottom - top), c, 'rx="2"');
});

/* level lines */
line(8, 1410, 163.5, '#46a888', '6 3', 1.500);
line(8, 667, 309.5, '#543285', '5 3');
line(8, 1410, 355.5, '#9be861', '1 3');
line(667, 1400, 376.5, '#7c3fb5', '5 3');
line(8, 667, 471.500, '#60409a', '5 3');
line(667, 1400, 470, '#4d327f', '5 3', 2);
line(8, 1410, 485, '#b8860f', '1 3');
line(8, 1412, 519, '#ef4444', '6 3', 2);
line(1052, 1412, 521, '#1d6f0a', '6 3', 2);
line(667, 1365, 563.5, '#7c3fb5', '5 3');
line(1240, 1412, 567.5, '#1f6a14', '2 2');
line(8, 1410, 577.5, '#9c332c', '1 3');
line(8, 1410, 633.5, '#a0640f', '6 3');
line(8, 667, 633.5, '#8a62a8', '3 6');
line(1052, 1410, 673, '#1d6f0a', '6 3', 2);
line(1352, 1410, 448.5, '#9a9a9a', '1 3');

const bubbles = (list, dot, label) => list.forEach(([i, cy, r, s, ly]) => {
  out.push(`<circle cx="${xAt(i) + .5}" cy="${cy}" r="${r}" fill="${dot}" fill-opacity=".78"/>`);
  if (s) text(xAt(i) + 1, ly + 3, s, 'lbl', label);
});
bubbles(longs, UP, '#1fc04f');
bubbles(shorts, DOWN, '#f4440a');
[[23,552],[30,667]].forEach(([i, y]) => text(xAt(i) + 1, y, 'B', 'lbl', '#2fd365'));
[[26,411],[32,515]].forEach(([i, y]) => text(xAt(i) + 1, y, 'S', 'lbl', '#c9c9c9'));
text(36, 156, '81,499.9', 'tag', '#b5b5b5');
text(1064, 680, '76,199.1', 'tag', '#b5b5b5');

/* inline order labels */
[['익절가(입력)', 348, '#9be861'], ['진입가(입력)', 478, '#f5b41a'], ['손절가(입력)', 570, '#ef4444']].forEach(([s, y, c]) => {
  rect(256.5, y + .5, 64, 13, '#0d1017', `stroke="${c}" stroke-opacity=".5" rx="3"`);
  text(288, y + 10.500, s, 'tag big mid', c);
});
rect(9.5, 597.5, 37, 12, '#0d1017', 'stroke="#77777b" rx="6"');
text(28, 606.5, 'BYB<tspan fill="#f2a91e">I</tspan>T', 'lbl', '#fff');

/* right hand names */
text(1409, 161, 'PWH', 'tag end', '#ff8c00');
text(1409, 171, 'PMH', 'tag end', '#00e5ff');
text(1409, 516, 'POC', 'tag end', '#ef4444');
text(1409, 519, 'PDH', 'tag end', '#39ff14');
text(1409, 566, 'D open', 'tag end', '#39ff14');
text(1409, 632, 'PWL', 'tag end', '#ff8c00');
text(1409, 671, 'PDL', 'tag end', '#39ff14');

/* price axis */
[[81,0,211],[80,5,259],[80,0,307],[79,0,403],[78,0,500],[77,5,548],[77,0,596],[76,5,644],[76,0,692]].forEach(([k, h, y]) =>
  text(1420, y + 4, `${k},${h}00.0`, 'axis'));
const frame = (y, h, stroke, fill = '#0d0e12') => rect(1416.500, y + .5, 65, h, fill, `stroke="${stroke}" rx="3"`);
frame(154, 16, '#303036'); text(1421, 166, 'H', 'tag', '#8a8a8a'); text(1478, 166, '81,499.9', 'tag end', '#fff');
frame(348, 14, '#4f7a2e'); text(1420, 359, '79,499.0', 'tag', '#9be861');
frame(440, 16, '#fff', '#fff'); text(1420, 453, '현재', 'tag', '#222'); text(1478, 453, '78,530.3', 'tag end', '#222');
frame(458, 13, '#fff', '#fff'); text(1449, 468, '2:35', 'tag mid', '#222');
frame(478, 14, '#6b4c12'); text(1420, 489, '78,152.9', 'tag', '#f5a71a');
frame(570, 14, '#6e2424'); text(1420, 581, '77,194.1', 'tag', '#ef4444');
frame(665, 15, '#303036'); text(1421, 677, 'L', 'tag', '#8a8a8a'); text(1478, 677, '76,199.1', 'tag end', '#fff');

/* indicator panes */
[719, 801, 865, 927].forEach(y => rect(8, y, 1404, 2, '#111'));
rect(8, 724, 1404, 14, '#020b06');
rect(8, 781, 1404, 15, '#120500');
line(8, 1408, 738.5, '#6a6a6a', '1 3');
line(8, 1408, 760, '#3c3c3c', '4 3');
line(8, 1408, 781.5, '#6a6a6a', '1 3');
text(12, 735, 'RSI 14', 'title');
text(12, 817, 'CVD 선물 · Binance', 'title');
text(12, 881, 'CVD 현물 · Binance', 'title');
text(12, 943, 'OI · Bybit', 'title');
text(74, 943, '펀딩 +0.0061%', 'tag', '#22c55e');
poly('0,743 25,746 57,744 89,749 121,750 153,751 185,762 217,768 249,765 281,768 313,767 346,767 378,764 410,761 442,760 506,761 538,761 570,753 603,753 635,766 667,765 700,761 731,758 763,752 795,757 829,758 860,755 896,756 923,764 955,767 987,773 1018,770 1051,768 1085,769 1116,776 1148,769 1182,767 1213,767 1244,762 1276,763 1308,760 1341,751', '#9575e8');
poly('0,811 25,813 89,813 121,815 153,818 185,827 217,832 249,829 313,830 346,829 378,827 410,825 474,827 538,827 570,825 603,825 635,834 667,835 731,834 763,837 859,839 923,841 955,846 985,849 1018,849 1085,853 1116,857 1148,856 1213,854 1244,852 1280,851 1341,848', '#eab308');
poly('0,878 25,884 57,884 89,883 121,894 153,897 185,901 217,910 249,912 281,913 313,913 346,912 378,907 410,906 442,907 506,905 570,908 603,909 635,918 667,916 700,914 731,911 763,904 805,896 829,891 859,886 896,879 923,880 955,889 985,892 1018,893 1051,887 1085,890 1116,892 1148,887 1213,884 1244,879 1308,878 1341,873', '#a3a3a3');
poly('0,974 25,974 57,977 121,977 153,979 185,978 217,973 249,967 281,971 313,973 346,975 378,975 410,973 442,968 538,970 570,968 603,971 635,975 700,975 731,971 763,967 795,952 829,950 866,951 896,950 923,956 955,952 985,946 1018,944 1085,939 1128,936 1182,938 1243,940 1308,939 1341,941', '#2fa8e8');
text(33, 806, '64.7K', 'tag mid', '#f5b41a');
text(1092, 864, '44.4K', 'tag mid', '#f5b41a');
text(613, 926, '3.5K', 'tag mid', '#b5b5b5');
text(1319, 868, '5.5K', 'tag mid', '#b5b5b5');
text(129, 987, '24.1K', 'tag mid', '#38bdf8');
text(1124, 930, '27.9K', 'tag mid', '#38bdf8');
text(667, 997, '31(월)', 'tag mid', '#f5b41a');
text(859, 997, '9/1(화)', 'tag mid', '#9ccdf2');
text(1420, 741, '70', 'axis dim');
text(1420, 786, '30', 'axis dim');
[[744, '58.6', '#a78bfa'], [840, '48.6K', '#eab308'], [870, '5.5K', '#a3a3a3'], [934, '27.4K', '#38bdf8']].forEach(([y, s, c]) => {
  rect(1416, y, 66, 14, c, 'rx="2"');
  text(1420, y + 11, s, 'tag', '#16161a');
});

document.getElementById('chart').innerHTML = out.join('');
```
